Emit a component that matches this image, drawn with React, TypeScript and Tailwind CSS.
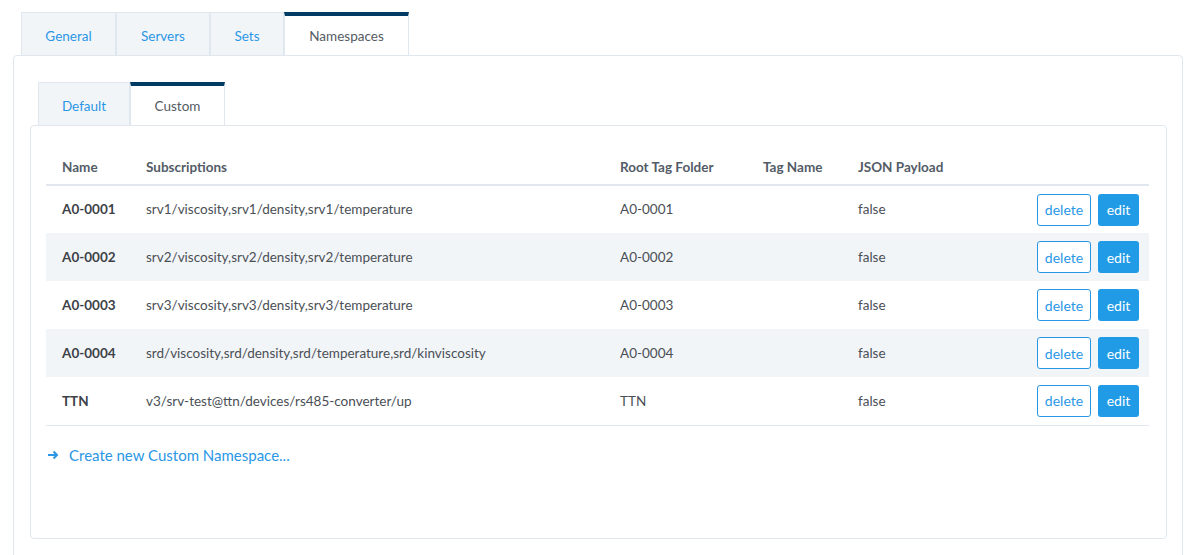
import React from "react";

const font = { fontFamily: "Lato, 'Noto Sans', sans-serif" };

const outerTabs = [
    { label: "General", w: "w-[95px]" },
    { label: "Servers", w: "w-[94px]" },
    { label: "Sets", w: "w-[74px]" },
    { label: "Namespaces", w: "w-[125px]", active: true },
];

const innerTabs = [
    { label: "Default", w: "w-[92px]" },
    { label: "Custom", w: "w-[95px]", active: true },
];

const rows = [
    { name: "A0-0001", subs: "srv1/viscosity,srv1/density,srv1/temperature", root: "A0-0001", tag: "", json: "false" },
    { name: "A0-0002", subs: "srv2/viscosity,srv2/density,srv2/temperature", root: "A0-0002", tag: "", json: "false" },
    { name: "A0-0003", subs: "srv3/viscosity,srv3/density,srv3/temperature", root: "A0-0003", tag: "", json: "false" },
    { name: "A0-0004", subs: "srd/viscosity,srd/density,srd/temperature,srd/kinviscosity", root: "A0-0004", tag: "", json: "false" },
    { name: "TTN", subs: "v3/srv-test@ttn/devices/rs485-converter/up", root: "TTN", tag: "", json: "false" },
];

function Tab({ label, w, active }: { label: string; w: string; active?: boolean }) {
    return (
        <div
            className={
                active
                    ? `${w} h-[43px] -mb-px flex items-center justify-center bg-white border-x border-[#e1e7ee] border-t-4 border-t-[#003b64] text-[#555b63] text-[13.5px] pt-px relative z-10`
                    : `${w} h-[43px] flex items-center justify-center bg-[#f2f5f8] border border-[#e1e7ee] border-b-0 text-[#2a97e6] text-[13.5px] pt-1`
            }
        >
            {label}
        </div>
    );
}

export default function App() {
    return (
        <div className="bg-white w-[1187px] h-[555px] overflow-hidden pt-[12px] pl-[13px]" style={font}>
            <div className="flex pl-[8px]">
                {outerTabs.map((t) => (
                    <Tab key={t.label} {...t} />
                ))}
            </div>
            <div className="w-[1170px] h-[520px] border border-[#e1e7ee] rounded-[4px] pt-[26px] pl-[16px]">
                <div className="flex pl-[8px]">
                    {innerTabs.map((t) => (
                        <Tab key={t.label} {...t} />
                    ))}
                </div>
                <div className="w-[1137px] h-[414px] border border-[#e1e7ee] rounded-[4px] pt-[25px] px-[15px]">
                    <table className="w-[1103px] table-fixed border-collapse text-[13.5px] text-[#4a4f55]">
                        <colgroup>
                            <col className="w-[100px]" />
                            <col className="w-[474px]" />
                            <col className="w-[143px]" />
                            <col className="w-[95px]" />
                            <col className="w-[130px]" />
                            <col />
                        </colgroup>
                        <thead>
                            <tr className="h-[34px] border-b-2 border-[#e1e7ee] text-left text-[#535c67]">
                                <th className="pl-4 font-bold align-middle">Name</th>
                                <th className="font-bold align-middle">Subscriptions</th>
                                <th className="font-bold align-middle">Root Tag Folder</th>
                                <th className="font-bold align-middle">Tag Name</th>
                                <th className="font-bold align-middle">JSON Payload</th>
                                <th></th>
                            </tr>
                        </thead>
                        <tbody>
                            {rows.map((r, i) => (
                                <tr
                                    key={r.name}
                                    className={`h-[48px] ${i % 2 === 1 ? "bg-[#f2f5f8]" : ""} ${i === rows.length - 1 ? "border-b border-[#e1e7ee]" : ""}`}
                                >
                                    <td className="pl-4 font-bold text-[#3d4248]">{r.name}</td>
                                    <td className="whitespace-nowrap">{r.subs}</td>
                                    <td>{r.root}</td>
                                    <td>{r.tag}</td>
                                    <td>{r.json}</td>
                                    <td className="pr-[10px]">
                                        <div className="flex justify-end gap-[7px]">
                                            <button className="h-[32px] w-[54px] border border-[#2a97e6] rounded-[3px] text-[#2a97e6] bg-white text-[14px]">
                                                delete
                                            </button>
                                            <button className="h-[32px] w-[41px] rounded-[3px] bg-[#229be7] text-white text-[14px]">
                                                edit
                                            </button>
                                        </div>
                                    </td>
                                </tr>
                            ))}
                        </tbody>
                    </table>
                    <div className="flex items-center mt-[18px] pl-[1px] text-[#2a97e6] text-[15px]">
                        <svg width="12" height="12" viewBox="0 0 12 12" className="mr-[10px]">
                            <path d="M1 6h9M6.5 2.5 10 6l-3.5 3.5" fill="none" stroke="#2a97e6" strokeWidth="2" />
                        </svg>
                        Create new Custom Namespace...
                    </div>
                </div>
            </div>
        </div>
    );
}
